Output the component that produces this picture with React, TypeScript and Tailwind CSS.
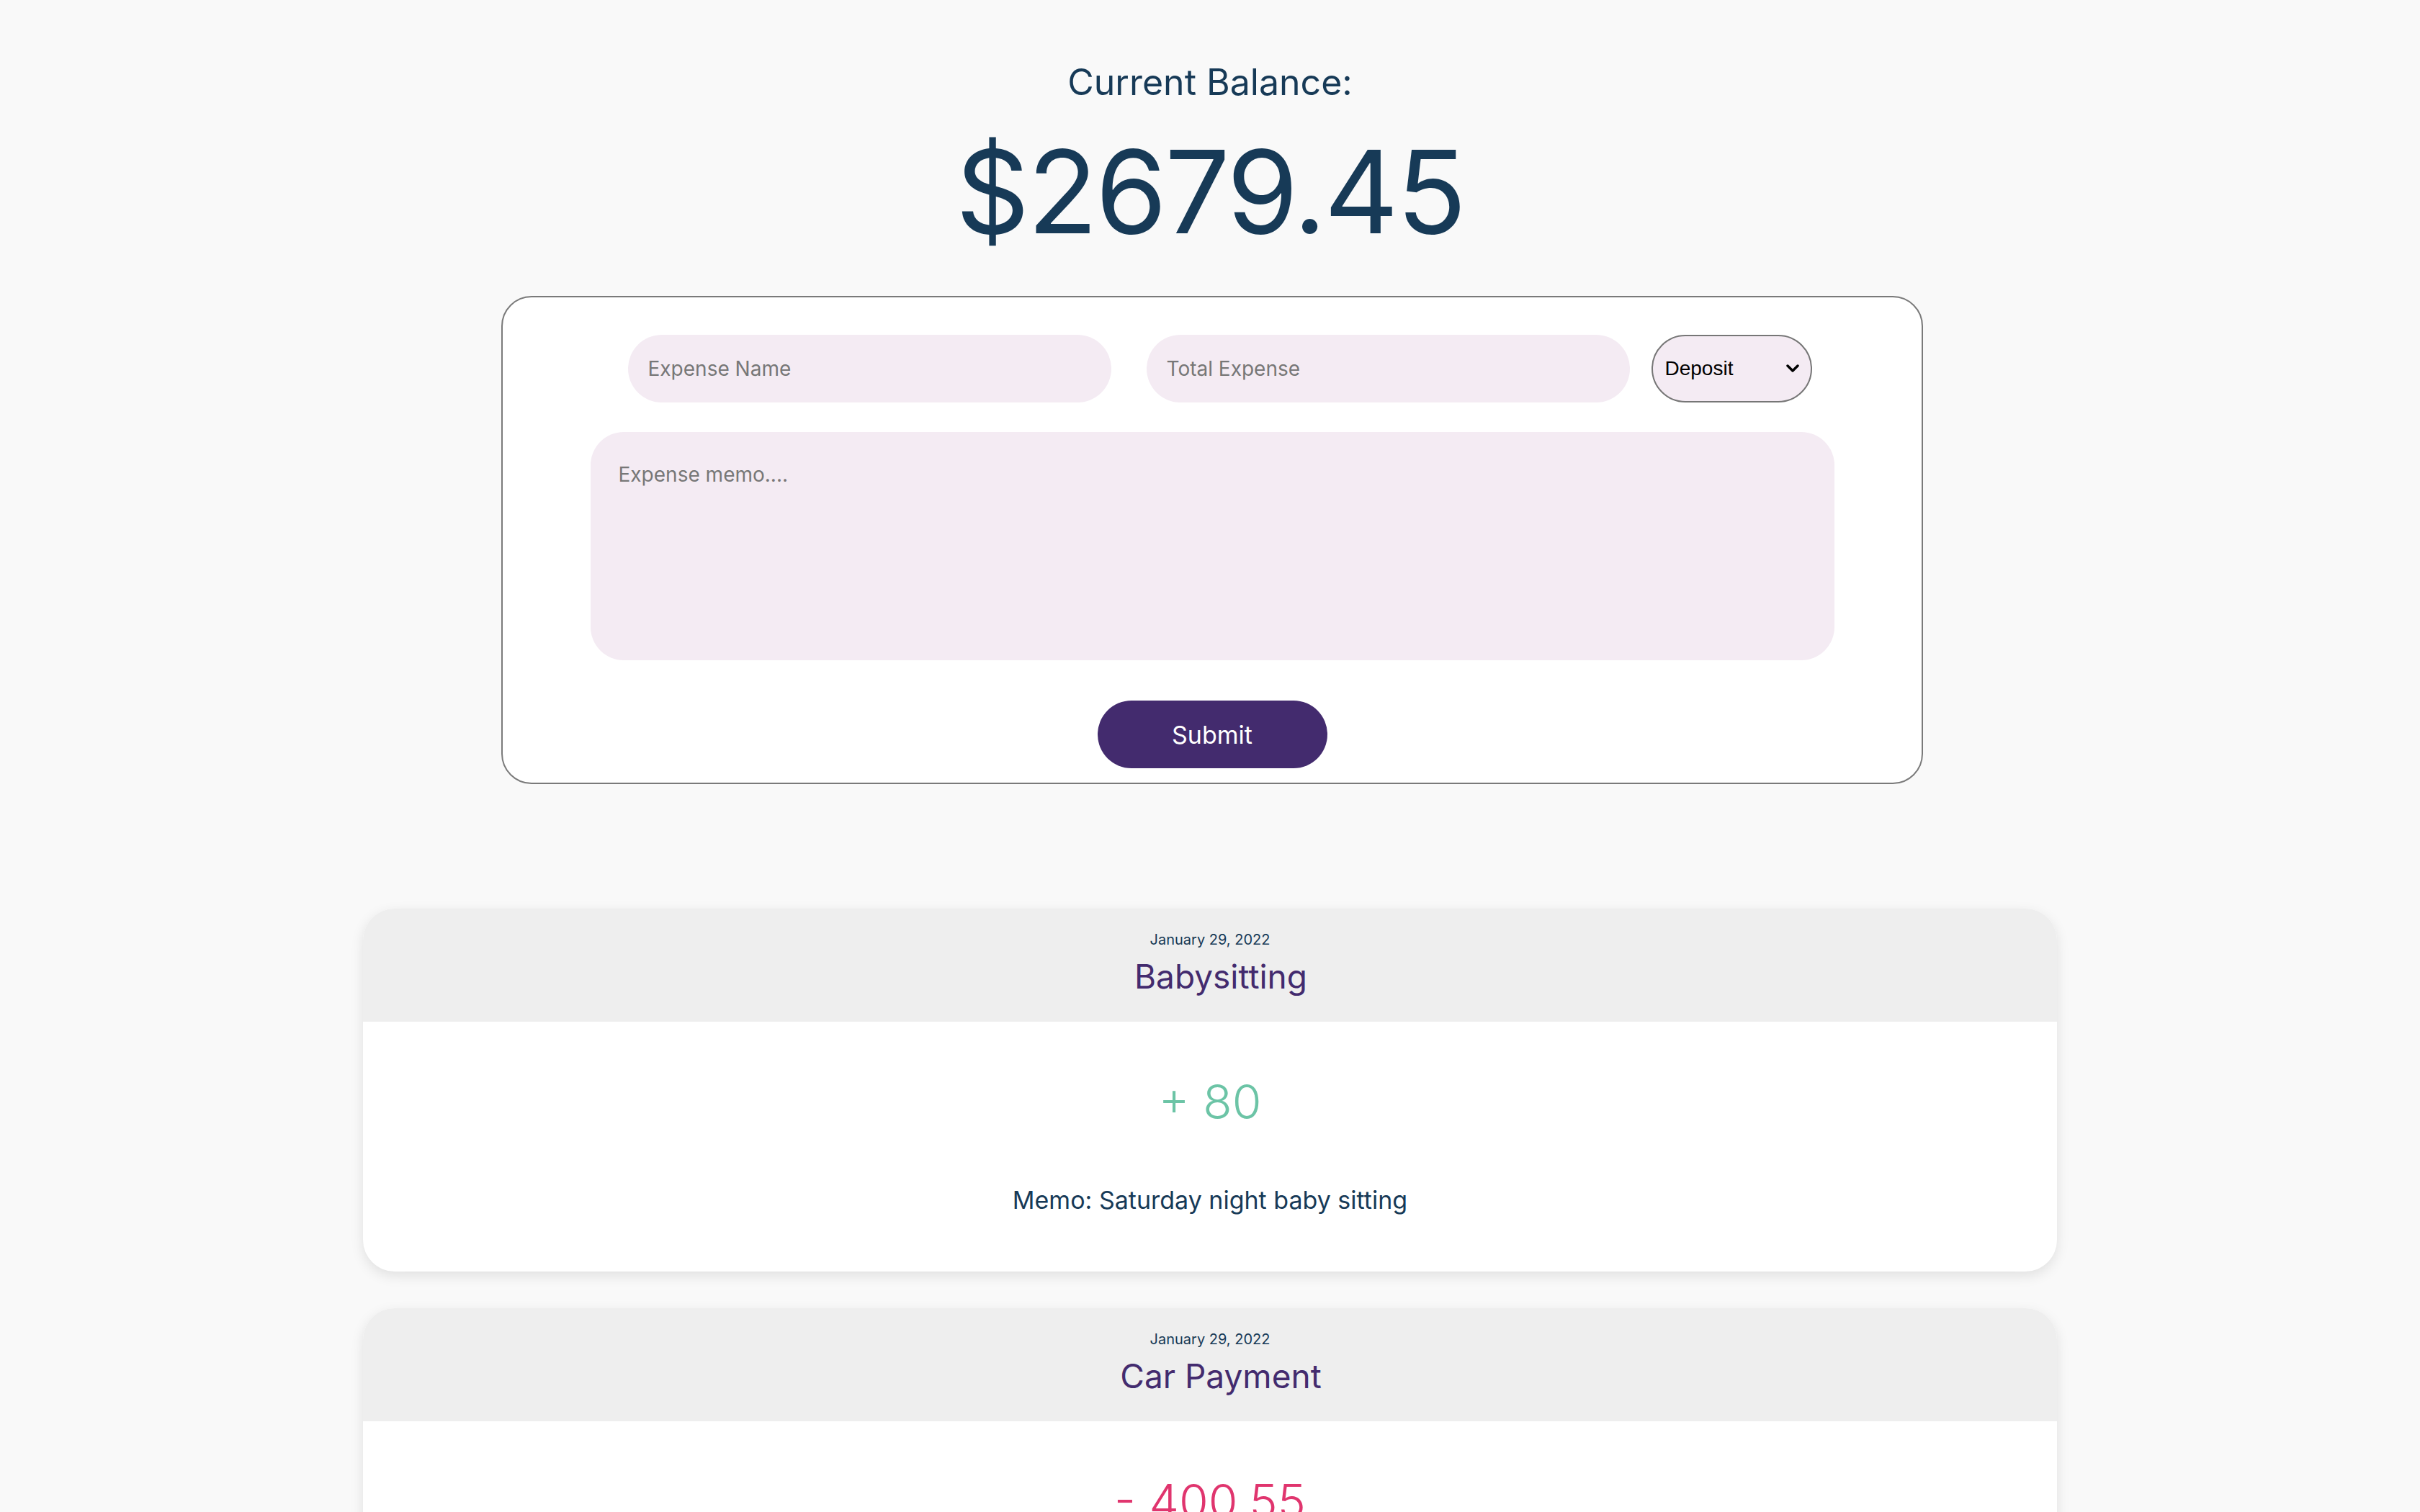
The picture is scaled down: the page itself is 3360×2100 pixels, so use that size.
import React, { useState } from "react";

type Entry = {
  date: string;
  name: string;
  amount: string;
  deposit: boolean;
  memo: string;
};

const entries: Entry[] = [
  {
    date: "January 29, 2022",
    name: "Babysitting",
    amount: "80",
    deposit: true,
    memo: "Saturday night baby sitting",
  },
  {
    date: "January 29, 2022",
    name: "Car Payment",
    amount: "400.55",
    deposit: false,
    memo: "Monthly car payment",
  },
];

const EntryCard = ({ entry }: { entry: Entry }) => (
  <div className="w-[2352px] rounded-[44px] bg-white shadow-[0_6px_18px_rgba(0,0,0,0.10)] overflow-hidden">
    <div className="h-[157px] bg-[#eeeeee] flex flex-col items-center pt-[32px]">
      <p className="text-[20px] leading-[22px] text-[#173a57]">{entry.date}</p>
      <h3 className="mt-[14px] pl-[30px] text-[46px] leading-[52px] text-[#432b6e]">
        {entry.name}
      </h3>
    </div>
    <div className="h-[347px] flex flex-col items-center pt-[76px]">
      <p
        className={
          "text-[66px] leading-[70px] font-light " +
          (entry.deposit ? "text-[#6cc4a6]" : "text-[#e0356e]")
        }
      >
        {entry.deposit ? "+ " : "- "}
        {entry.amount}
      </p>
      <p className="mt-[82px] text-[34px] leading-[40px] text-[#173a57]">
        Memo: {entry.memo}
      </p>
    </div>
  </div>
);

const App = () => {
  const [kind, setKind] = useState("Deposit");

  return (
    <div className="min-h-screen bg-[#f9f9f9] flex flex-col items-center font-['Inter',sans-serif] pb-[60px]">
      <h2 className="mt-[89px] text-[50px] leading-[50px] text-[#173a57]">
        Current Balance:
      </h2>
      <h1 className="mt-[47px] text-[160px] leading-[160px] text-[#173a57] tracking-[-3px]">
        $2679.45
      </h1>

      {/* expense form */}
      <form
        className="mt-[65px] ml-[6px] w-[1974px] h-[678px] bg-white border-2 border-[#7a7a7a] rounded-[42px] flex flex-col items-center pt-[52px]"
        onSubmit={(e) => e.preventDefault()}
      >
        <div className="flex items-center pl-[21px]">
          <input
            type="text"
            placeholder="Expense Name"
            className="w-[671px] h-[94px] rounded-full bg-[#f4ebf3] px-[28px] text-[28px] text-[#333] placeholder:text-[#777] outline-none"
          />
          <input
            type="text"
            placeholder="Total Expense"
            className="ml-[49px] w-[671px] h-[94px] rounded-full bg-[#f4ebf3] px-[28px] text-[28px] text-[#333] placeholder:text-[#777] outline-none"
          />
          <div className="relative ml-[30px]">
            <select
              value={kind}
              onChange={(e) => setKind(e.target.value)}
              className="appearance-none w-[223px] h-[94px] rounded-full bg-[#f4ebf3] border-2 border-[#767676] pl-[17px] text-[28px] text-black font-['Liberation_Sans',Arial,sans-serif] outline-none"
            >
              <option>Deposit</option>
              <option>Expense</option>
            </select>
            <svg
              className="absolute right-[18px] top-1/2 -translate-y-1/2 pointer-events-none"
              width="18"
              height="12"
              viewBox="0 0 18 12"
            >
              <path
                d="M2 2 L9 9 L16 2"
                fill="none"
                stroke="#000"
                strokeWidth="3.5"
                strokeLinecap="round"
                strokeLinejoin="round"
              />
            </svg>
          </div>
        </div>

        <textarea
          placeholder="Expense memo...."
          className="mt-[41px] w-[1727px] h-[317px] rounded-[46px] bg-[#f4ebf3] px-[39px] py-[38px] text-[28px] text-[#333] placeholder:text-[#777] resize-none outline-none"
        />

        <button
          type="submit"
          className="mt-[56px] w-[319px] h-[94px] rounded-full bg-[#432b6e] text-white text-[34px]"
        >
          Submit
        </button>
      </form>

      {/* history */}
      <div className="mt-[173px] flex flex-col gap-[51px]">
        {entries.map((entry) => (
          <EntryCard key={entry.name} entry={entry} />
        ))}
      </div>
    </div>
  );
};

export default App;
